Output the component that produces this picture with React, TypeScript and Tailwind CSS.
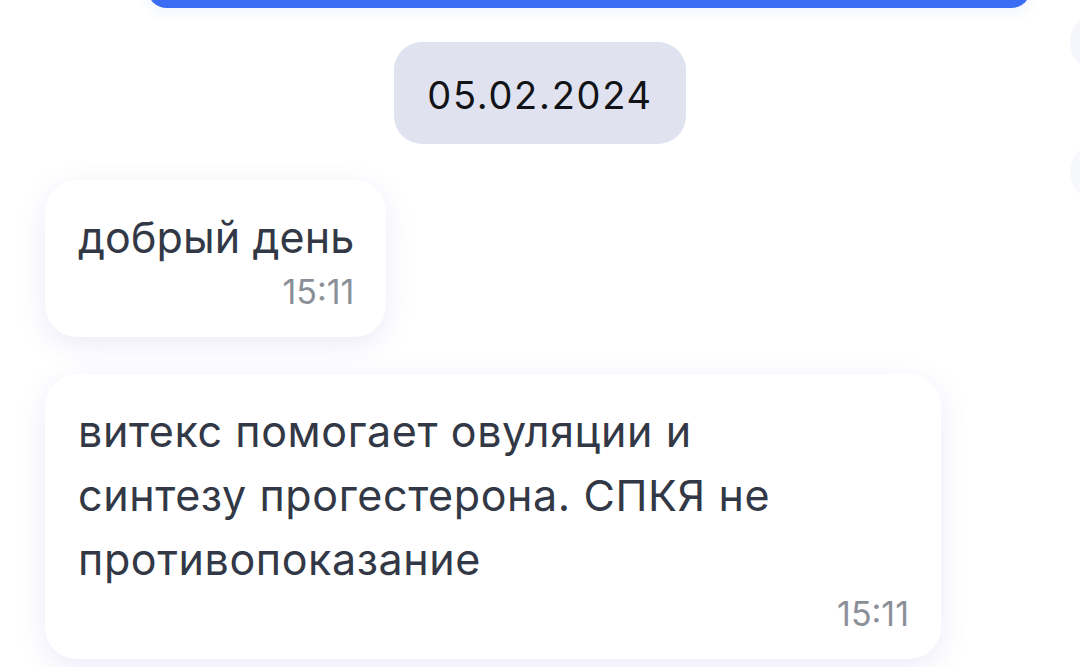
import React from 'react'

const messages = [
    { lines: ['добрый день'], time: '15:11', wide: false },
    {
        lines: ['витекс помогает овуляции и', 'синтезу прогестерона. СПКЯ не', 'противопоказание'],
        time: '15:11',
        wide: true,
    },
]

function Bubble({ lines, time, wide }: { lines: string[]; time: string; wide: boolean }) {
    return (
        <div
            className={
                (wide ? 'w-[896px] tracking-[0.6px] ' : 'w-fit tracking-[0.1px] ') +
                'bg-white rounded-[32px] pl-[33px] pr-[32px] pt-[25px] pb-[27px] shadow-[0_8px_28px_rgba(110,100,220,0.13)]'
            }
        >
            <div className="text-[43px] leading-[64px] text-[#323845]">
                {lines.map((l, i) => (
                    <div key={i} className="whitespace-nowrap">
                        {l}
                    </div>
                ))}
            </div>
            <div className="mt-[5px] text-right text-[34px] leading-[36px] tracking-normal text-[#8b9098]">{time}</div>
        </div>
    )
}

export default function App() {
    return (
        <div
            className="relative w-[1080px] h-[667px] overflow-hidden bg-white"
            style={{ fontFamily: 'Inter, "Noto Sans", sans-serif' }}
        >
            {/* top button, only its lower edge shows */}
            <div className="ml-[147px] -mt-[40px] w-[884px] h-[48px] rounded-[20px] bg-[#3a6cf4] shadow-[0_4px_14px_rgba(58,108,244,0.08)]" />

            {/* right side round buttons, cut off */}
            <div className="absolute left-[1070px] top-[12px] w-[60px] h-[60px] rounded-full bg-[#f5f7fc]" />
            <div className="absolute left-[1070px] top-[142px] w-[60px] h-[60px] rounded-full bg-[#f7f8fc]" />

            <div className="flex justify-center mt-[34px]">
                <div className="w-[292px] h-[102px] rounded-[28px] bg-[#e0e3ef] flex items-center justify-center pt-[4px] text-[38px] text-[#121317] tracking-[1.7px]">
                    05.02.2024
                </div>
            </div>

            <div className="flex flex-col items-start gap-[37px] pl-[45px] mt-[36px]">
                {messages.map((m, i) => (
                    <Bubble key={i} lines={m.lines} time={m.time} wide={m.wide} />
                ))}
            </div>
        </div>
    )
}
